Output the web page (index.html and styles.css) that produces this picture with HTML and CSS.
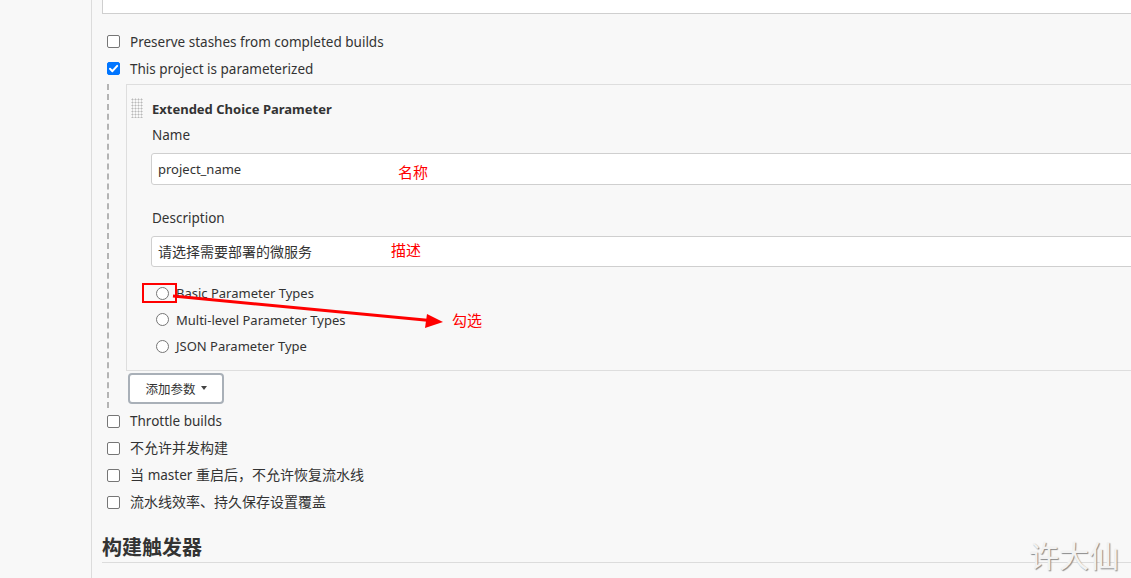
FILE: index.html
```html
<!DOCTYPE html>
<html lang="zh">
<head>
<meta charset="utf-8">
<title>Jenkins 配置</title>
<link rel="stylesheet" href="styles.css">
</head>
<body>
<div class="page">
  <aside class="side"></aside>
  <main class="main">
    <div class="top-box"></div>

    <div class="cb-row first">
      <span class="cb"></span>
      <span class="cb-label">Preserve stashes from completed builds</span>
    </div>
    <div class="cb-row">
      <span class="cb checked">
        <svg viewBox="0 0 13 13" width="13" height="13"><path d="M3 6.8 L5.4 9.2 L10.2 3.9" fill="none" stroke="#fff" stroke-width="2" stroke-linecap="round" stroke-linejoin="round"/></svg>
      </span>
      <span class="cb-label">This project is parameterized</span>
    </div>

    <div class="param-area">
      <div class="panel">
        <div class="handle"></div>
        <div class="panel-body">
          <div class="panel-title">Extended Choice Parameter</div>
          <div class="field-label">Name</div>
          <div class="text-input">project_name</div>
          <div class="field-label desc">Description</div>
          <div class="text-input short zh">请选择需要部署的微服务</div>
          <div class="radios">
            <div class="radio-row"><span class="radio"></span><span class="radio-label">Basic Parameter Types</span></div>
            <div class="radio-row"><span class="radio"></span><span class="radio-label">Multi-level Parameter Types</span></div>
            <div class="radio-row"><span class="radio"></span><span class="radio-label">JSON Parameter Type</span></div>
          </div>
        </div>
      </div>
      <button class="add-btn">添加参数 <span class="caret"></span></button>
    </div>

    <div class="cb-row">
      <span class="cb"></span>
      <span class="cb-label">Throttle builds</span>
    </div>
    <div class="cb-row">
      <span class="cb"></span>
      <span class="cb-label zh">不允许并发构建</span>
    </div>
    <div class="cb-row">
      <span class="cb"></span>
      <span class="cb-label zh">当 <span class="lat">master</span> 重启后，不允许恢复流水线</span>
    </div>
    <div class="cb-row">
      <span class="cb"></span>
      <span class="cb-label zh">流水线效率、持久保存设置覆盖</span>
    </div>

    <h2 class="section-title">构建触发器</h2>
  </main>
</div>

<div class="note note-name">名称</div>
<div class="note note-desc">描述</div>
<div class="note note-check">勾选</div>
<div class="mark-box"></div>
<svg class="arrow" width="274" height="40" viewBox="0 0 274 40">
  <line x1="1" y1="6" x2="258" y2="30.5" stroke="#ff0000" stroke-width="3"/>
  <polygon points="271,32 255,24 253,38" fill="#ff0000"/>
</svg>
<div class="watermark">许大仙</div>
</body>
</html>
```

FILE: styles.css
```css
html, body {
  margin: 0;
  padding: 0;
}
body {
  background: #f8f8f8;
  font-family: "Noto Sans", "Noto Sans CJK SC", sans-serif;
  font-size: 13.5px;
  color: #333;
  overflow: hidden;
  width: 1131px;
  height: 578px;
  position: relative;
}
.page {
  display: flex;
  align-items: stretch;
  min-height: 578px;
}
.side {
  width: 91px;
  flex: none;
  border-right: 1px solid #dcdcdc;
}
.main {
  flex: none;
  width: 1200px;
  padding-left: 10px;
}
.top-box {
  height: 14px;
  background: #fff;
  border: 1px solid #cfcfcf;
  border-top: none;
  box-sizing: border-box;
}
.cb-row {
  display: flex;
  align-items: center;
  height: 27px;
  padding-left: 5px;
}
.cb-row.first {
  margin-top: 14px;
}
.cb {
  width: 13px;
  height: 13px;
  box-sizing: border-box;
  border: 1px solid #767676;
  border-radius: 2px;
  background: #fff;
  flex: none;
  display: flex;
}
.cb.checked {
  background: #0075ff;
  border-color: #0075ff;
}
.cb.checked svg {
  margin: -1px;
}
.cb-label {
  margin-left: 10px;
  line-height: 20px;
  white-space: nowrap;
}
.zh {
  font-size: 14px;
}
.lat {
  font-size: 13.5px;
}
.param-area {
  margin-left: 5px;
  border-left: 2px dashed #b4b4b4;
  padding-left: 17px;
  margin-top: 2px;
  padding-bottom: 4px;
}
.panel {
  display: flex;
  border: 1px solid #dedede;
  background: #f8f8f8;
  padding: 13px 0 10px 4px;
}
.handle {
  width: 12px;
  height: 20px;
  flex: none;
  background-image: radial-gradient(circle, #b9b9b9 0.9px, transparent 1.1px);
  background-size: 3px 3px;
  margin-right: 9px;
}
.panel-body {
  flex: 1;
}
.panel-title {
  font-weight: bold;
  font-size: 13px;
  line-height: 20px;
  margin-top: 1px;
}
.field-label {
  line-height: 20px;
  margin-top: 6px;
}
.field-label.desc {
  margin-top: 23px;
}
.text-input {
  margin-top: 8px;
  height: 32px;
  box-sizing: border-box;
  background: #fff;
  border: 1px solid #cfcfcf;
  border-radius: 3px;
  padding-left: 6px;
  line-height: 30px;
  font-size: 13px;
  color: #333;
  margin-left: -1px;
  white-space: nowrap;
}
.text-input.short {
  height: 31px;
  line-height: 29px;
}
.text-input.zh {
  font-size: 14px;
}
.radios {
  margin-top: 13px;
}
.radio-row {
  display: flex;
  align-items: center;
  height: 26.5px;
  padding-left: 4px;
}
.radio {
  width: 13px;
  height: 13px;
  box-sizing: border-box;
  border: 1px solid #767676;
  border-radius: 50%;
  background: #fff;
  flex: none;
}
.radio-label {
  margin-left: 7px;
  font-size: 13px;
  white-space: nowrap;
}
.add-btn {
  margin: 2px 0 0 2px;
  width: 96px;
  height: 31px;
  background: #fff;
  border: 2px solid #a9b0b8;
  border-radius: 4px;
  font-family: "Noto Sans CJK SC", sans-serif;
  font-size: 12.5px;
  color: #333;
  padding: 0;
  display: flex;
  align-items: center;
  justify-content: center;
}
.caret {
  display: inline-block;
  width: 0;
  height: 0;
  border-left: 3.5px solid transparent;
  border-right: 3.5px solid transparent;
  border-top: 4px solid #444;
  margin-left: 5px;
}
.section-title {
  margin: 18px 0 0 0;
  font-size: 20px;
  line-height: 28px;
  font-weight: bold;
  color: #333;
  border-bottom: 1px solid #dcdcdc;
}
.note {
  position: absolute;
  color: #ff0000;
  font-family: "Noto Sans CJK SC", sans-serif;
  font-size: 15px;
  line-height: 20px;
}
.note-name { left: 398px; top: 162px; }
.note-desc { left: 391px; top: 240px; }
.note-check { left: 452px; top: 310px; }
.mark-box {
  position: absolute;
  left: 142px;
  top: 283px;
  width: 35px;
  height: 20px;
  box-sizing: border-box;
  border: 2px solid #ff0000;
}
.arrow {
  position: absolute;
  left: 172px;
  top: 290px;
}
.watermark {
  position: absolute;
  left: 1029px;
  top: 534px;
  font-family: "Noto Sans CJK SC", sans-serif;
  font-size: 30px;
  line-height: 40px;
  color: #f2f2f2;
  text-shadow: 1px 1px 1px #8a8a8a;
}
```
